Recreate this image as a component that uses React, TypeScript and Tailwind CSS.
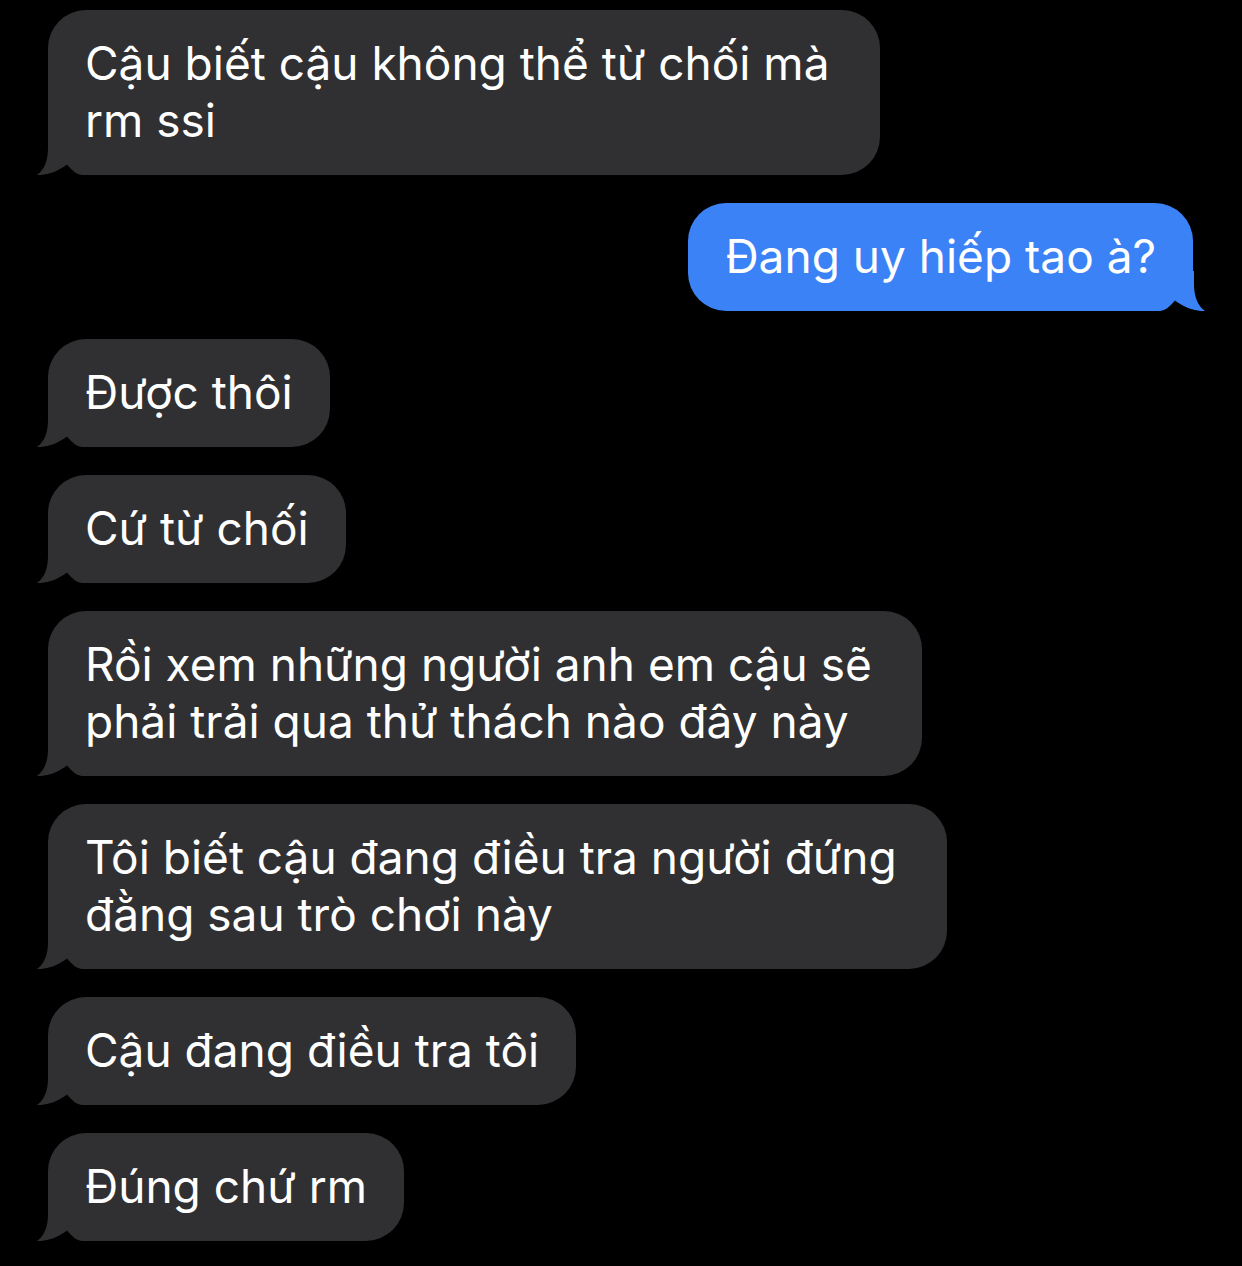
import React from 'react';

const GRAY = '#303033';
const BLUE = '#3b82f6';

const Tail = ({ color, side }: { color: string; side: 'left' | 'right' }) => (
  <svg
    width="56"
    height="40"
    viewBox="0 0 56 40"
    className={
      side === 'left'
        ? 'absolute bottom-0 left-[-11px]'
        : 'absolute bottom-0 right-[-12px] -scale-x-100'
    }
  >
    <path
      d="M11 0 L11 13 C11 26 7 35 0 40 C10 40.5 21 37 30 29.5 C35 35 39 39.5 45 40 L56 40 L56 0 Z"
      fill={color}
    />
    <path
      d="M0 40 C10 40.5 21 37 30 29.5 C35 35 39 39.5 45 40 L45 41 L0 41 Z"
      fill="#000"
    />
  </svg>
);

const messages: { me?: boolean; lines: string[] }[] = [
  { lines: ['Cậu biết cậu không thể từ chối mà', 'rm ssi'] },
  { me: true, lines: ['Đang uy hiếp tao à?'] },
  { lines: ['Được thôi'] },
  { lines: ['Cứ từ chối'] },
  { lines: ['Rồi xem những người anh em cậu sẽ', 'phải trải qua thử thách nào đây này'] },
  { lines: ['Tôi biết cậu đang điều tra người đứng', 'đằng sau trò chơi này'] },
  { lines: ['Cậu đang điều tra tôi'] },
  { lines: ['Đúng chứ rm'] },
];

export default function App() {
  return (
    <div className="w-[1242px] h-[1266px] bg-black overflow-hidden pt-[10px] font-['Inter','Noto_Sans',sans-serif]">
      <div className="flex flex-col gap-[28px]">
        {messages.map((m, i) => (
          <div key={i} className={m.me ? 'flex justify-end pr-[49px]' : 'flex justify-start pl-[48px]'}>
            <div
              className={`relative rounded-[38px] pl-[37px] ${m.lines.length > 1 ? 'pr-[50px]' : 'pr-[37px]'} pt-[25px] pb-[26px] text-white text-[46px] leading-[57px] whitespace-nowrap ${m.me ? 'bg-[#3b82f6]' : 'bg-[#303033]'}`}
            >
              <Tail color={m.me ? BLUE : GRAY} side={m.me ? 'right' : 'left'} />
              <div className="relative">
                {m.lines.map((l, j) => (
                  <div key={j}>{l}</div>
                ))}
              </div>
            </div>
          </div>
        ))}
      </div>
    </div>
  );
}
